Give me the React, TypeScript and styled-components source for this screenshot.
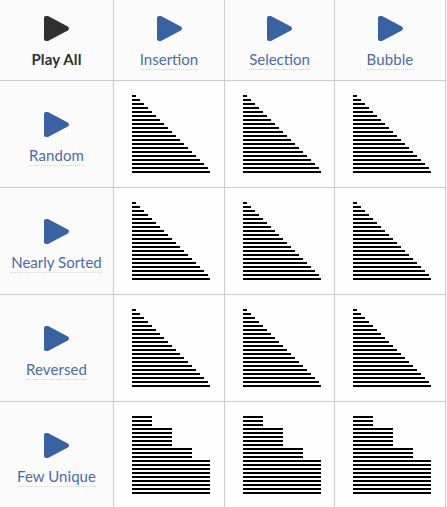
import React from 'react';
import styled, { createGlobalStyle } from 'styled-components';

const GlobalStyle = createGlobalStyle`
  body {
    margin: 0;
    background: #fdfdfd;
    font-family: Lato, Roboto, "Liberation Sans", sans-serif;
    overflow: hidden;
  }
`;

const Table = styled.div`
  display: grid;
  grid-template-columns: 114px 111px 110px 111px;
  grid-template-rows: 81px 107px 107px 107px 107px;
  width: 447px;
  height: 507px;
  overflow: hidden;
`;

const Cell = styled.div`
  box-sizing: border-box;
  border-right: 1px solid #ccc;
  border-bottom: 1px solid #ccc;
`;

const HeaderCell = styled(Cell)<{ $top: number }>`
  display: flex;
  flex-direction: column;
  align-items: center;
  padding-top: ${(p) => p.$top}px;
  background: #fbfbfb;
`;

const ChartCell = styled(Cell)`
  display: flex;
  flex-direction: column;
  gap: 2px;
  padding: 14px 0 0 18px;
`;

const Bar = styled.div<{ $width: number }>`
  width: ${(p) => p.$width}px;
  height: 2px;
  background: #000;
`;

const PlayIcon = styled.svg<{ $dark?: boolean }>`
  display: block;
  flex: none;
  width: 25px;
  height: 25px;
  fill: ${(p) => (p.$dark ? '#303030' : '#3862a3')};
`;

const Label = styled.span<{ $width: number; $spacing: number; $bold?: boolean }>`
  box-sizing: border-box;
  width: ${(p) => p.$width}px;
  height: 20px;
  margin-top: 9px;
  display: flex;
  justify-content: center;
  white-space: nowrap;
  font-size: 15px;
  line-height: 18px;
  letter-spacing: ${(p) => p.$spacing}px;
  font-weight: ${(p) => (p.$bold ? 700 : 400)};
  color: ${(p) => (p.$bold ? '#303030' : '#4a6ca8')};
  background: ${(p) =>
    p.$bold ? 'none' : 'repeating-linear-gradient(90deg, #d2d2d2 0 1px, transparent 1px 2px) 0 100% / 100% 1px no-repeat'};
`;

interface HeaderProps {
  text: string;
  width: number;
  spacing?: number;
  top?: number;
  dark?: boolean;
}

function Header({ text, width, spacing = 0, top = 31, dark }: HeaderProps) {
  return (
    <HeaderCell $top={top}>
      <PlayIcon $dark={dark} viewBox="0 0 25 25">
        <path d="M0 2Q0 0 2 0H4L23.8 10.6Q26.2 12.5 23.8 14.4L4 25H2Q0 25 0 23Z" />
      </PlayIcon>
      <Label $width={width} $spacing={spacing} $bold={dark}>
        {text}
      </Label>
    </HeaderCell>
  );
}

const repeat = (width: number, count: number) => Array<number>(count).fill(width);
const ramp = Array.from({ length: 20 }, (_, i) => Math.min(78, (i + 1) * 4));
const steps = [...repeat(20, 3), ...repeat(40, 5), ...repeat(60, 3), ...repeat(78, 9)];

const columns: HeaderProps[] = [
  { text: 'Play All', width: 50, spacing: 0.15, dark: true },
  { text: 'Insertion', width: 57 },
  { text: 'Selection', width: 61 },
  { text: 'Bubble', width: 47, spacing: 0.1 },
];

const rows: (HeaderProps & { bars: number[] })[] = [
  { text: 'Random', width: 55, spacing: 0.1, bars: ramp },
  { text: 'Nearly Sorted', width: 91, bars: ramp },
  { text: 'Reversed', width: 61, spacing: 0.1, bars: ramp },
  { text: 'Few Unique', width: 79, spacing: 0.05, bars: steps },
];

export default function App() {
  return (
    <>
      <GlobalStyle />
      <Table>
        {columns.map((c) => (
          <Header key={c.text} {...c} top={16} />
        ))}
        {rows.map(({ bars, ...header }) => (
          <React.Fragment key={header.text}>
            <Header {...header} />
            {[0, 1, 2].map((n) => (
              <ChartCell key={n}>
                {bars.map((w, i) => (
                  <Bar key={i} $width={w} />
                ))}
              </ChartCell>
            ))}
          </React.Fragment>
        ))}
      </Table>
    </>
  );
}
